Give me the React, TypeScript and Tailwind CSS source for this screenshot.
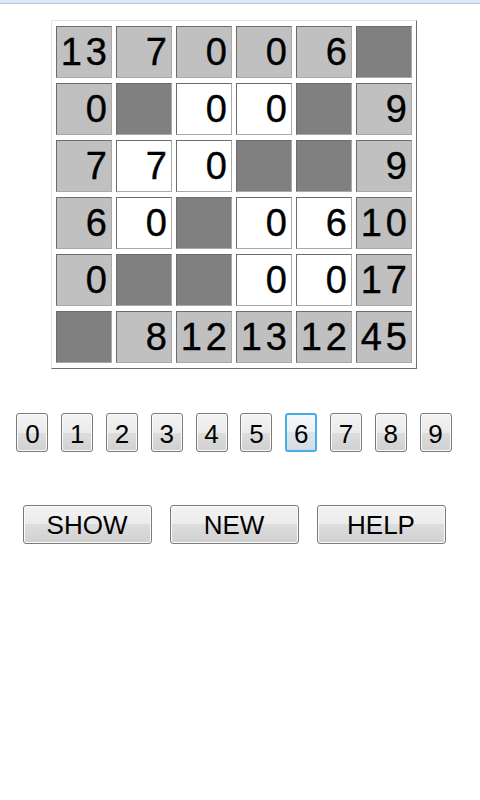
import React from "react";

type Cell = { v: string; c: "L" | "D" | "W" };

const rows: Cell[][] = [
  [{ v: "13", c: "L" }, { v: "7", c: "L" }, { v: "0", c: "L" }, { v: "0", c: "L" }, { v: "6", c: "L" }, { v: "", c: "D" }],
  [{ v: "0", c: "L" }, { v: "", c: "D" }, { v: "0", c: "W" }, { v: "0", c: "W" }, { v: "", c: "D" }, { v: "9", c: "L" }],
  [{ v: "7", c: "L" }, { v: "7", c: "W" }, { v: "0", c: "W" }, { v: "", c: "D" }, { v: "", c: "D" }, { v: "9", c: "L" }],
  [{ v: "6", c: "L" }, { v: "0", c: "W" }, { v: "", c: "D" }, { v: "0", c: "W" }, { v: "6", c: "W" }, { v: "10", c: "L" }],
  [{ v: "0", c: "L" }, { v: "", c: "D" }, { v: "", c: "D" }, { v: "0", c: "W" }, { v: "0", c: "W" }, { v: "17", c: "L" }],
  [{ v: "", c: "D" }, { v: "8", c: "L" }, { v: "12", c: "L" }, { v: "13", c: "L" }, { v: "12", c: "L" }, { v: "45", c: "L" }],
];

const bgFor = (c: Cell["c"]) =>
  c === "L" ? "bg-[#c0c0c0]" : c === "D" ? "bg-[#808080]" : "bg-white";

const font = { fontFamily: '"Liberation Sans", Arial, sans-serif' };

export default function App() {
  return (
    <div className="w-[480px] h-[800px] bg-white" style={font}>
      <div className="h-[4px] bg-[#dde9f6] border-b border-[#b4c6da]" />
      <div className="w-[468px] flex flex-col items-center">
        <div className="mt-[16px] grid grid-cols-[repeat(6,56px)] gap-x-[4px] gap-y-[5px] px-[4px] py-[5px] border border-t-[#e4e4e4] border-l-[#e4e4e4] border-r-[#6e6e6e] border-b-[#6e6e6e] bg-white">
          {rows.flat().map((cell, i) => (
            <div
              key={i}
              className={`h-[52px] border border-t-[#6c6c6c] border-l-[#6c6c6c] border-r-[#a9a9a9] border-b-[#a9a9a9] ${bgFor(cell.c)} flex items-center justify-end text-[38px] leading-[50px] tracking-[4px] text-black [-webkit-text-stroke:0.4px_black]`}
            >
              {cell.v}
            </div>
          ))}
        </div>

        <div className="mt-[44px] flex gap-[12.8px]">
          {["0", "1", "2", "3", "4", "5", "6", "7", "8", "9"].map((d) => (
            <button
              key={d}
              className={
                d === "6"
                  ? "w-[32px] h-[39px] rounded-[3px] border-2 border-[#4aaee6] bg-[linear-gradient(to_bottom,#f4f9fc_0%,#eaf1f6_50%,#dde6ec_50%,#d2dce3_100%)] text-[26px] leading-[35px] text-black flex items-center justify-center pt-[3px]"
                  : "w-[32px] h-[39px] rounded-[3px] border border-[#7a7a7a] shadow-[inset_0_0_0_1px_#fbfbfb] bg-[linear-gradient(to_bottom,#f3f3f3_0%,#ebebeb_50%,#dddddd_50%,#d0d0d0_100%)] text-[26px] leading-[37px] text-black flex items-center justify-center pt-[3px]"
              }
            >
              {d}
            </button>
          ))}
        </div>

        <div className="mt-[53px] flex gap-[18px]">
          {["SHOW", "NEW", "HELP"].map((t) => (
            <button
              key={t}
              className="w-[129px] h-[39px] rounded-[3px] border border-[#7a7a7a] shadow-[inset_0_0_0_1px_#fbfbfb] bg-[linear-gradient(to_bottom,#f3f3f3_0%,#ebebeb_50%,#dddddd_50%,#d0d0d0_100%)] text-[26px] leading-[37px] text-black flex items-center justify-center pt-[1px]"
            >
              {t}
            </button>
          ))}
        </div>
      </div>
    </div>
  );
}
